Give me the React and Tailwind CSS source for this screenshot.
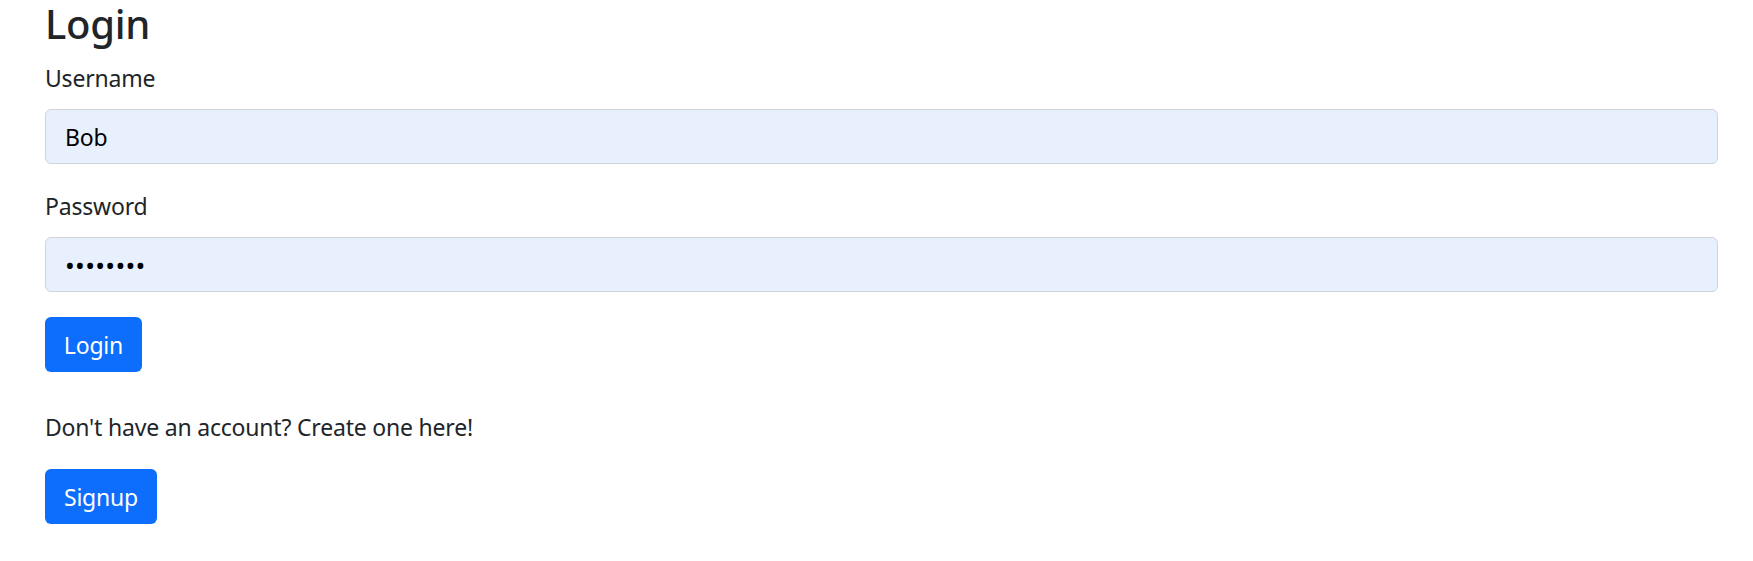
export default function App() {
  const font = { fontFamily: '"Noto Sans", "Open Sans", sans-serif' };
  return (
    <div className="min-h-[561px] bg-white pl-[45px] pr-[35px] text-[#212529]" style={font}>
      <h3 className="mb-[12px] text-[40px] font-medium leading-[48px] tracking-[-0.3px]">Login</h3>
      <form onSubmit={(e) => e.preventDefault()}>
        <div className="mb-[24px]">
          <label htmlFor="u" className="mb-[13px] block text-[23px] leading-[36px] tracking-[-0.2px]">Username</label>
          <input
            id="u"
            type="text"
            defaultValue="Bob"
            className="block h-[55px] w-full rounded-[6px] border border-[#ced4da] bg-[#e8f0fe] px-[19px] text-[23px] tracking-[-0.2px] text-black outline-none"
          />
        </div>
        <div className="mb-[25px]">
          <label htmlFor="p" className="mb-[13px] block text-[23px] leading-[36px] tracking-[-0.2px]">Password</label>
          <input
            id="p"
            type="password"
            defaultValue="password"
            className="block h-[55px] w-full rounded-[6px] border border-[#ced4da] bg-[#e8f0fe] px-[19px] text-[26px] tracking-[0.3px] text-black outline-none"
          />
        </div>
        <button type="submit" className="h-[55px] w-[97px] rounded-[6px] bg-[#0d6efd] text-center text-[23px] leading-[36px] tracking-[-0.2px] text-white">
          Login
        </button>
      </form>
      <p className="mt-[37px] mb-[24px] text-[23px] leading-[36px] tracking-[-0.2px]">Don't have an account? Create one here!</p>
      <button type="button" className="h-[55px] w-[112px] rounded-[6px] bg-[#0d6efd] text-center text-[23px] leading-[36px] tracking-[-0.2px] text-white">
        Signup
      </button>
    </div>
  );
}
